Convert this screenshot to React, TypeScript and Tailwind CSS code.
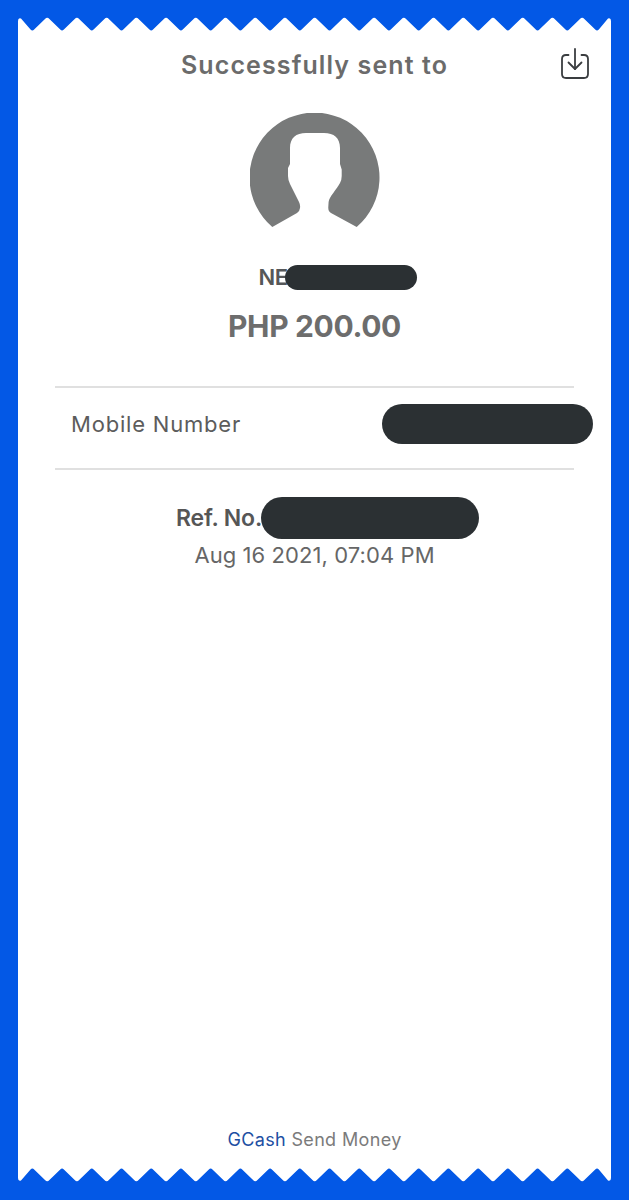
import React from "react";

const W = 593;
const PERIOD = 29.72;

function edgePath(firstPeak: number, flip: boolean) {
  const H = 14;
  const y = (v: number) => (flip ? H - v : v);
  let d = `M0 ${y(H + 1)} L0 ${y(4)} Q0 ${y(0.5)} 3 ${y(1.5)} `;
  for (let px = firstPeak - PERIOD; px < W + PERIOD; px += PERIOD) {
    const v = px + PERIOD / 2;
    const nx = px + PERIOD;
    if (v > W) break;
    if (px >= 0) {
      d += `L${(px - 2.2).toFixed(2)} ${y(2)} Q${px.toFixed(2)} ${y(-0.6)} ${(px + 2.2).toFixed(2)} ${y(2)} `;
    }
    d += `L${(v - 1.8).toFixed(2)} ${y(12.4)} Q${v.toFixed(2)} ${y(14.4)} ${(v + 1.8).toFixed(2)} ${y(12.4)} `;
    if (nx > W - 3) break;
  }
  d += `L${W - 3} ${y(1.5)} Q${W} ${y(0.5)} ${W} ${y(4)} L${W} ${y(H + 1)} Z`;
  return d;
}

function Edge({ flip }: { flip?: boolean }) {
  return (
    <svg width={W} height={16} viewBox={`0 -1 ${W} 16`} className="block shrink-0">
      <path d={edgePath(29.2, !!flip)} fill="#ffffff" />
    </svg>
  );
}

function Pill({ className }: { className: string }) {
  return <div className={`rounded-full bg-[#2b3033] shrink-0 ${className}`} />;
}

export default function App() {
  return (
    <div className="w-[629px] h-[1200px] bg-[#0358e6] px-[18px] pt-[16px] pb-[17px] flex flex-col font-['Inter','Noto_Sans',sans-serif]">
      <Edge />
      <div className="flex-1 bg-white flex flex-col items-stretch min-h-0">
        <div className="grid grid-cols-[1fr_auto_1fr] items-center mt-[15px] h-[36px]">
          <div />
          <div className="text-[25px] font-semibold tracking-[1.1px] text-[#6b6b6b] leading-[36px] whitespace-nowrap">
            Successfully sent to
          </div>
          <div className="justify-self-end mr-[22px] -mt-[4px]">
            <svg width="28" height="31" viewBox="0 0 28 31" fill="none" stroke="#3a3d40" strokeWidth="1.8" strokeLinecap="round" strokeLinejoin="round" className="block">
              <path d="M7.5 7H5Q1 7 1 11V26Q1 30 5 30H23Q27 30 27 26V11Q27 7 23 7H20.5" />
              <path d="M14 1V21" />
              <path d="M7.5 14.5L14 21L20.5 14.5" />
            </svg>
          </div>
        </div>

        <div className="flex justify-center mt-[30px]">
          <svg width="130" height="116" viewBox="0 0 130 116" className="block">
            <path
              fill="#787a7a"
              d="M22.3 114A65 65 0 1 1 106.7 114L81 100Q78 98.5 78.3 94L78.6 89C79 84 87 76 90 70Q91.7 67 91.7 63V56.5L90 51V35C90 25 84 20 74 20H56C46 20 40 25 40 35V51L38 55V63Q38 67 40 71L49 89Q50.5 92 50 95Q49.8 98 47 100Z"
            />
          </svg>
        </div>

        <div className="flex justify-center items-center mt-[35px] h-[26px] pl-[47px]">
          <span className="text-[22px] font-semibold tracking-[-0.6px] text-[#555759] leading-[26px]">NE</span>
          <Pill className="w-[132px] h-[25px] -ml-[2px]" />
        </div>

        <div className="text-center text-[30px] font-bold tracking-[-0.35px] text-[#6d6d6d] leading-[40px] mt-[16px]">
          PHP 200.00
        </div>

        <div className="mx-[37px] mt-[40px] h-[2px] bg-[#e0e0e0]" />
        <div className="flex items-center justify-between pl-[53px] h-[40px] mt-[16px]">
          <span className="text-[22px] text-[#5c5c5c] tracking-[0.8px] leading-[40px]">Mobile Number</span>
          <Pill className="w-[211px] h-[40px] mr-[18px]" />
        </div>
        <div className="mx-[37px] mt-[24px] h-[2px] bg-[#e0e0e0]" />

        <div className="flex justify-center items-center h-[42px] mt-[27px] pl-[26px]">
          <span className="text-[23px] font-semibold tracking-[-0.15px] text-[#565656] leading-[42px]">Ref. No.</span>
          <Pill className="w-[218px] h-[42px] -ml-[1px]" />
        </div>
        <div className="text-center text-[22px] text-[#666666] tracking-[0.08px] leading-[32px]">
          Aug 16 2021, 07:04 PM
        </div>

        <div className="flex-1" />
        <div className="text-center text-[18px] leading-[24px] tracking-[0.35px] text-[#7b7b7b] mb-[15px]">
          <span className="text-[#1e4fa3]">GCash</span> Send Money
        </div>
      </div>
      <Edge flip />
    </div>
  );
}
